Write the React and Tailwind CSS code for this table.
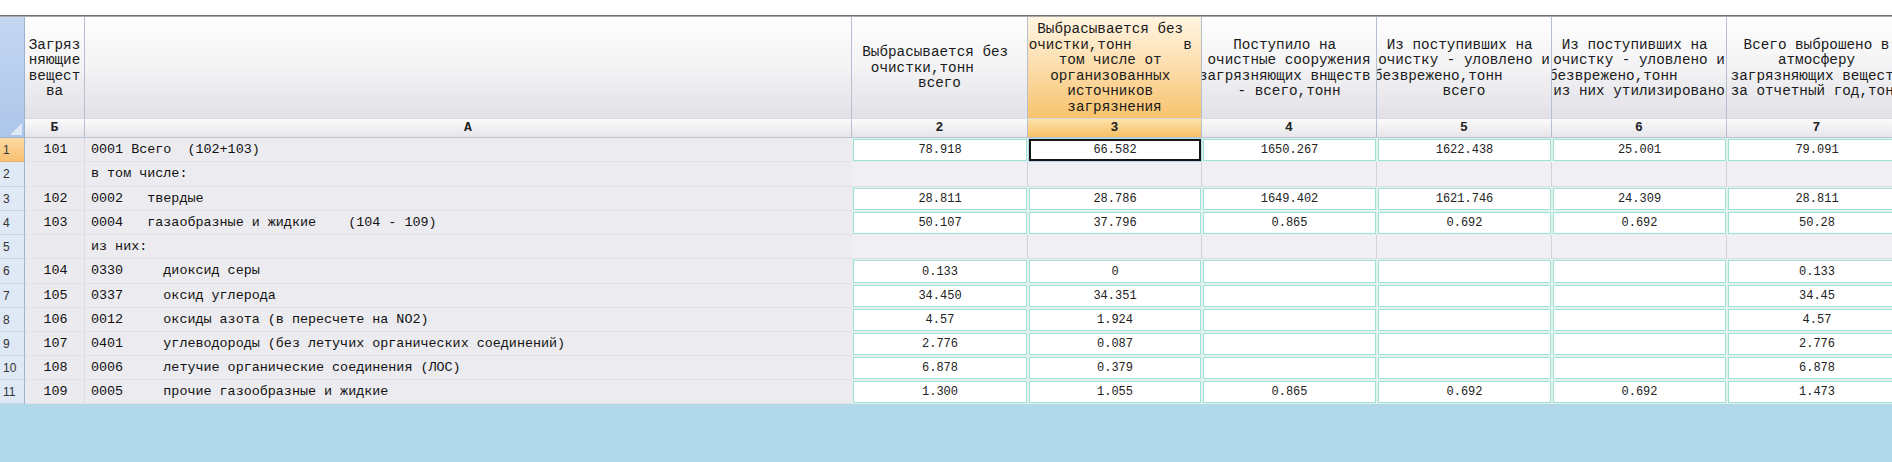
import React from "react";

function cx(...items) {
  return items.filter(Boolean).join(" ");
}

const MONO = "font-['Liberation_Mono','Courier_New',monospace]";
const SANS = "font-['Liberation_Sans',Arial,sans-serif]";

// widths: row no, Б, А, 2..7
const W = {
  num: "w-[25px]",
  b: "w-[60px]",
  a: "w-[767px]",
  c2: "w-[176px]",
  c3: "w-[174px]",
  c4: "w-[175px]",
  c5: "w-[175px]",
  c6: "w-[175px]",
  c7: "w-[180px]",
};
const DATA_W = [W.c2, W.c3, W.c4, W.c5, W.c6, W.c7];

const HEAD = [
  { w: W.c2, lines: ["Выбрасывается без ", "очистки,тонн    ", "всего"] },
  {
    w: W.c3,
    hot: true,
    lines: [
      "Выбрасывается без ",
      "очистки,тонн      в ",
      "том числе от ",
      "организованных ",
      "источников ",
      "загрязнения",
    ],
  },
  { w: W.c4, lines: ["Поступило на ", "очистные сооружения", "загрязняющих внществ ", "- всего,тонн"] },
  { w: W.c5, lines: ["Из поступивших на ", "очистку - уловлено и", "обезврежено,тонн       ", "всего"] },
  { w: W.c6, lines: ["Из поступивших на ", "очистку - уловлено и", "обезврежено,тонн       ", "из них утилизировано"] },
  { w: W.c7, lines: ["Всего выброшено в", "атмосферу", "загрязняющих веществ", "за отчетный год,тонн"] },
];

const ROWS = [
  { h: "h-[24px]", code: "101", name: "0001 Всего  (102+103)", vals: ["78.918", "66.582", "1650.267", "1622.438", "25.001", "79.091"] },
  { h: "h-[25px]", code: "", name: "в том числе:", gray: true },
  { h: "h-[24px]", code: "102", name: "0002   твердые", vals: ["28.811", "28.786", "1649.402", "1621.746", "24.309", "28.811"] },
  { h: "h-[24px]", code: "103", name: "0004   газаобразные и жидкие    (104 - 109)", vals: ["50.107", "37.796", "0.865", "0.692", "0.692", "50.28"] },
  { h: "h-[24px]", code: "", name: "из них:", gray: true },
  { h: "h-[25px]", code: "104", name: "0330     диоксид серы", vals: ["0.133", "0", "", "", "", "0.133"] },
  { h: "h-[24px]", code: "105", name: "0337     оксид углерода", vals: ["34.450", "34.351", "", "", "", "34.45"] },
  { h: "h-[24px]", code: "106", name: "0012     оксиды азота (в пересчете на NO2)", vals: ["4.57", "1.924", "", "", "", "4.57"] },
  { h: "h-[24px]", code: "107", name: "0401     углеводороды (без летучих органических соединений)", vals: ["2.776", "0.087", "", "", "", "2.776"] },
  { h: "h-[24px]", code: "108", name: "0006     летучие органические соединения (ЛОС)", vals: ["6.878", "0.379", "", "", "", "6.878"] },
  { h: "h-[24px]", code: "109", name: "0005     прочие газообразные и жидкие", vals: ["1.300", "1.055", "0.865", "0.692", "0.692", "1.473"] },
];

function HeadCell({ w, lines, hot }) {
  return (
    <div
      className={cx(
        w,
        "flex h-full shrink-0 flex-col items-center justify-center overflow-hidden border-r border-[#b4c0cf] pt-[2px] text-[14.3px] leading-[15.5px] text-[#1a1a1a]",
        hot
          ? "bg-linear-to-b from-[#fff5e2] to-[#f8c36c]"
          : "bg-linear-to-b from-[#fefefe] via-[#f3f3f5] to-[#e1e1e7]",
      )}
    >
      {lines.map((line, i) => (
        <div key={i} className="whitespace-pre">
          {line}
        </div>
      ))}
    </div>
  );
}

function LetterCell({ w, label, hot }) {
  return (
    <div
      className={cx(
        w,
        "flex h-full shrink-0 items-center justify-center border-r border-[#b4c0cf] text-[13px] font-bold text-[#222]",
        hot
          ? "bg-linear-to-b from-[#fde2a8] to-[#f6c066]"
          : "bg-linear-to-b from-[#fbfbfc] to-[#e6e6eb]",
      )}
    >
      {label}
    </div>
  );
}

function DataCell({ w, value, selected }) {
  if (selected) {
    return (
      <div className={cx(w, "h-full shrink-0 p-[1px]")}>
        <div className="flex h-full items-center justify-center border-2 border-[#151515] bg-white text-[12px] text-[#222]">
          {value}
        </div>
      </div>
    );
  }
  return (
    <div className={cx(w, "h-full shrink-0 bg-[#e3f1ef] p-[1px]")}>
      <div className="flex h-full items-center justify-center border border-[#9fe2d4] bg-white text-[12px] text-[#222]">
        {value}
      </div>
    </div>
  );
}

function Row({ row, index }) {
  const first = index === 0;
  return (
    <div className={cx("flex", row.h)}>
      <div
        className={cx(
          W.num,
          SANS,
          "flex h-full shrink-0 items-center border-r border-b border-r-[#9cb2cf] pl-[3px] text-[12px] text-[#333]",
          first
            ? "border-b-[#e2b36a] bg-linear-to-b from-[#fcd9a0] to-[#f6c070]"
            : "border-b-[#c6d4e7] bg-[#dfe8f5]",
        )}
      >
        {index + 1}
      </div>
      <div
        className={cx(
          W.b,
          "flex h-full shrink-0 items-center justify-center border-r border-b border-r-[#dcdbe0] border-b-[#e2e1e6] bg-[#ebeaee] pt-[1px] pl-[2px] text-[13.4px] text-[#111]",
        )}
      >
        {row.code}
      </div>
      <div
        className={cx(
          W.a,
          "flex h-full shrink-0 items-center whitespace-pre border-b border-[#e2e1e6] bg-[#ecebef] pt-[1px] pl-[6px] text-[13.4px] text-[#111]",
        )}
      >
        {row.name}
      </div>
      {row.gray
        ? DATA_W.map((w, i) => (
            <div
              key={i}
              className={cx(w, "h-full shrink-0 border-r border-b border-r-[#d2d1d7] border-b-[#dddce2] bg-[#f0eff3]")}
            />
          ))
        : DATA_W.map((w, i) => (
            <DataCell key={i} w={w} value={row.vals[i]} selected={first && i === 1} />
          ))}
    </div>
  );
}

export default function App() {
  return (
    <div className={cx(MONO, "h-[462px] w-[1892px] overflow-hidden bg-[#b1d9ea]")}>
      <div className="h-[15px] overflow-hidden bg-white">
        <p className={cx(SANS, "-mt-[18px] whitespace-nowrap pl-[80px] text-[16px] leading-[20px] text-[#111]")}>
          Сведения о выбросах загрязняющих веществ в атмосферу, их очистке и утилизации, тыс. тонн в год по предприятию
        </p>
      </div>
      <div className="h-[2px] border-t border-[#6f6f6f] bg-[#a9a9a9]" />

      <div className="flex">
        <div className="relative h-[121px] w-[25px] shrink-0 border-r border-b border-[#9cb2cf] bg-linear-to-b from-[#c4d7f2] to-[#adc6ea]">
          <svg className="absolute right-[2px] bottom-[2px]" width="12" height="12" viewBox="0 0 12 12">
            <polygon points="12,0 12,12 0,12" fill="#dfe8f6" />
          </svg>
        </div>
        <div className="flex flex-col">
          <div className="flex h-[101px]">
            <HeadCell w={W.b} lines={["Загряз", "няющие", "вещест", "ва"]} />
            <div className={cx(W.a, "h-full shrink-0 border-r border-[#b4c0cf] bg-linear-to-b from-[#fefefe] via-[#f3f3f5] to-[#e1e1e7]")} />
            {HEAD.map((col, i) => (
              <HeadCell key={i} w={col.w} lines={col.lines} hot={col.hot} />
            ))}
          </div>
          <div className="flex h-[20px] border-t border-b border-t-[#d8d8de] border-b-[#b9c4d3]">
            <LetterCell w={W.b} label="Б" />
            <LetterCell w={W.a} label="А" />
            {DATA_W.map((w, i) => (
              <LetterCell key={i} w={w} label={String(i + 2)} hot={i === 1} />
            ))}
          </div>
        </div>
      </div>

      {ROWS.map((row, i) => (
        <Row key={i} row={row} index={i} />
      ))}
    </div>
  );
}
